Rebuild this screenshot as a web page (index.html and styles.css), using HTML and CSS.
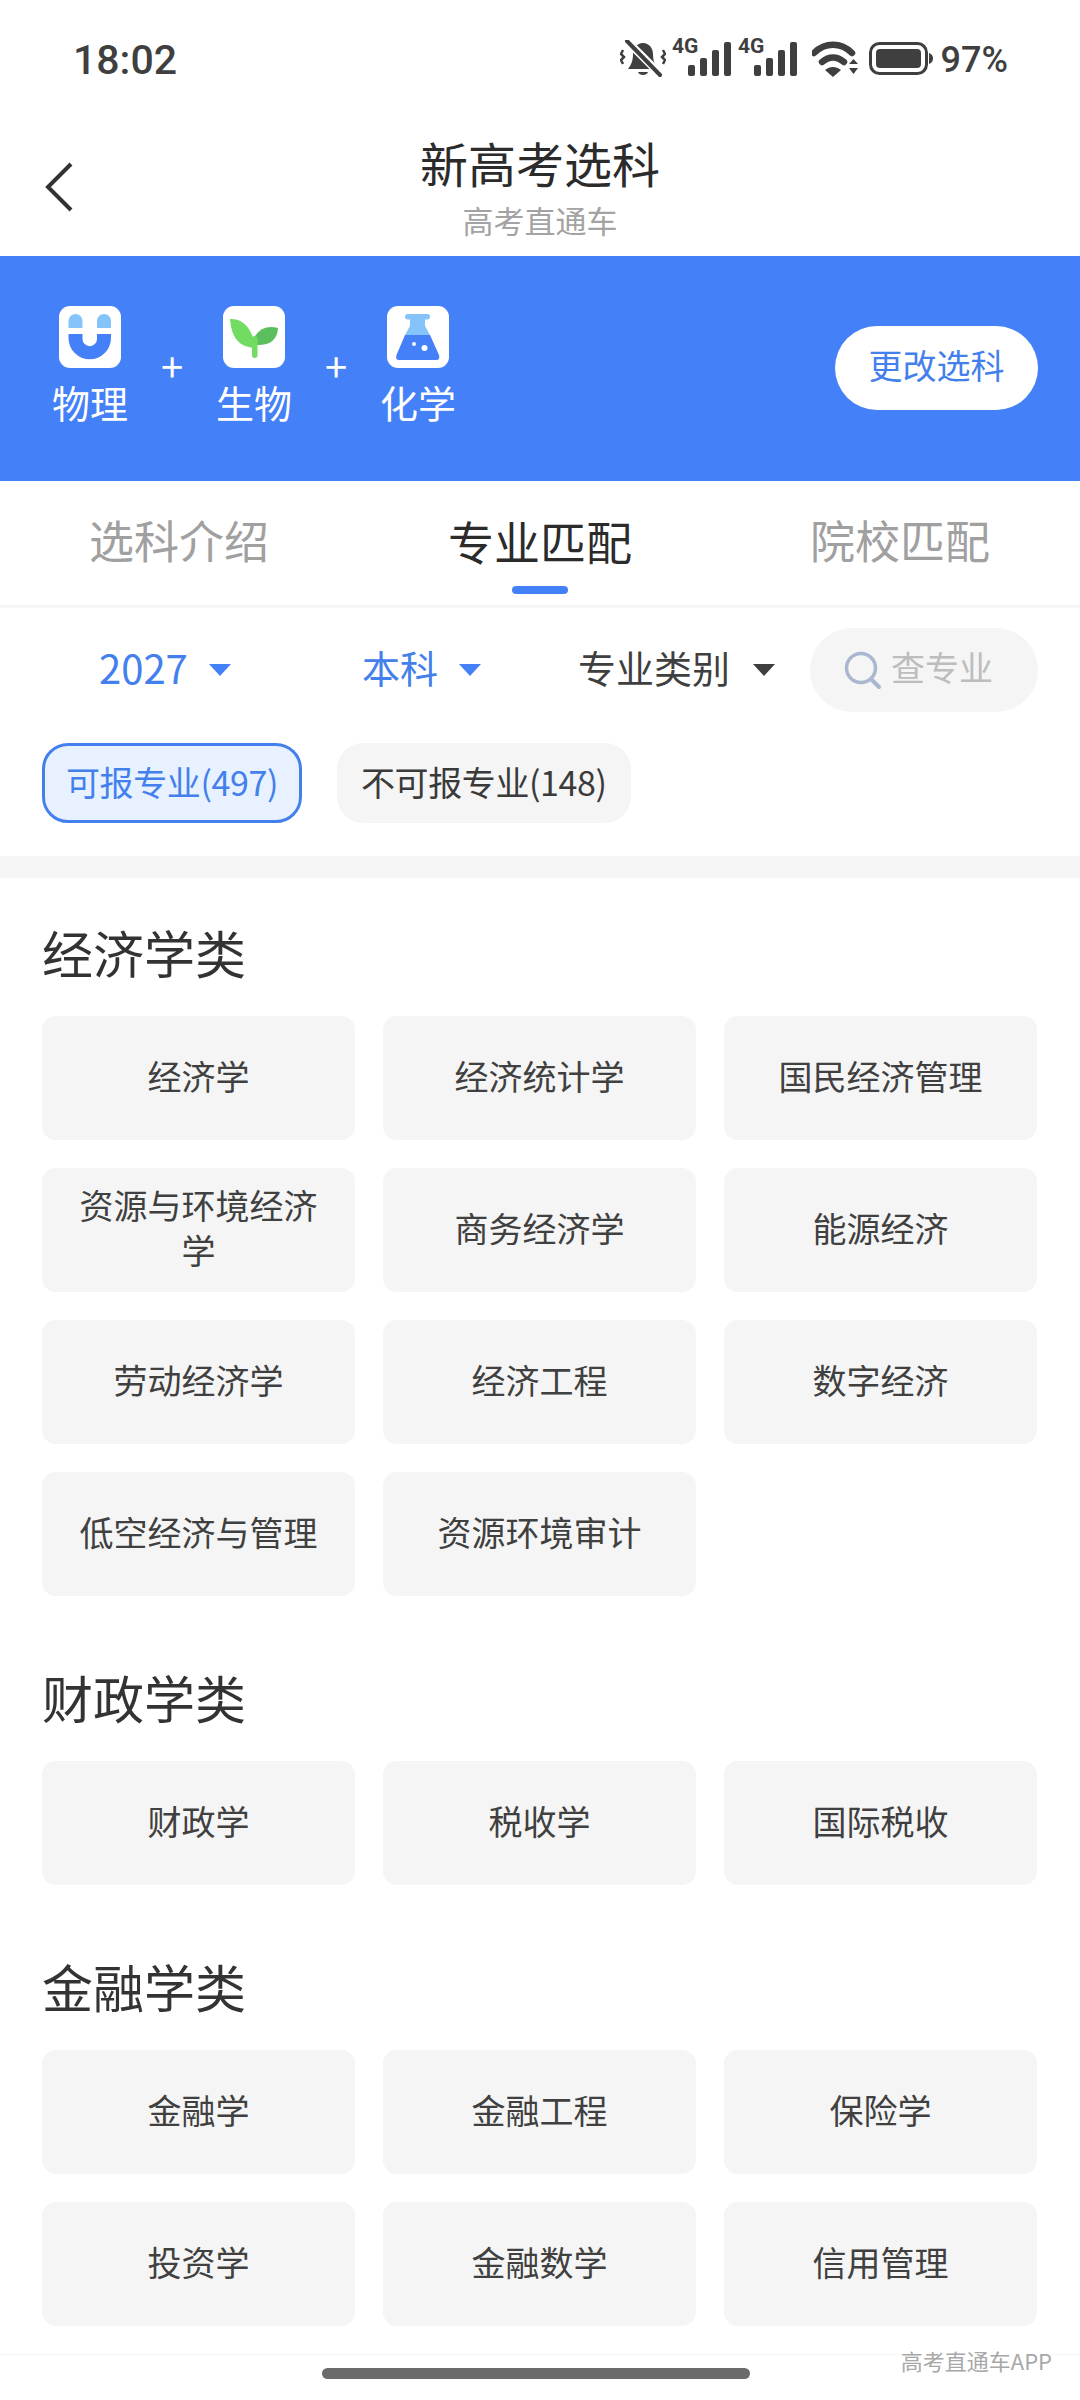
FILE: index.html
```html
<!DOCTYPE html>
<html lang="zh-CN">
<head>
  <meta charset="UTF-8" />
  <meta name="viewport" content="width=device-width, initial-scale=1.0" />
  <title>新高考选科</title>
  <link rel="stylesheet" href="styles.css">
</head>
<body>
  <div class="page">
    <div class="status-bar">
      <span class="time">18:02</span>
      <div class="status-icons">
        <svg class="icon-bell" width="46" height="40" viewBox="0 0 46 40">
          <path d="M23 3c6 0 10 5 10 11 0 7 2 11 5 15H8c3-4 5-8 5-15 0-6 4-11 10-11z" fill="#3f3f3f"/>
          <path d="M18 32h10c-1 4-9 4-10 0z" fill="#3f3f3f"/>
          <path d="M6 0L41 35" stroke="#fff" stroke-width="8"/>
          <path d="M7 1L40 35" stroke="#3f3f3f" stroke-width="4" stroke-linecap="round"/>
          <path d="M3 10l-2 4 3 3-3 3 2 4M43 10l2 4-3 3 3 3-2 4" fill="none" stroke="#3f3f3f" stroke-width="2.5"/>
        </svg>
        <svg class="icon-signal" width="60" height="48" viewBox="0 -8 60 48">
          <text x="0" y="13" class="sig-text">4G</text>
          <rect x="16" y="25" width="7" height="11" rx="2" fill="#3f3f3f"/>
          <rect x="28" y="18" width="7" height="18" rx="2" fill="#3f3f3f"/>
          <rect x="40" y="10" width="7" height="26" rx="2" fill="#3f3f3f"/>
          <rect x="52" y="2" width="7" height="34" rx="2" fill="#3f3f3f"/>
        </svg>
        <svg class="icon-signal" width="60" height="48" viewBox="0 -8 60 48">
          <text x="0" y="13" class="sig-text">4G</text>
          <rect x="16" y="25" width="7" height="11" rx="2" fill="#3f3f3f"/>
          <rect x="28" y="18" width="7" height="18" rx="2" fill="#3f3f3f"/>
          <rect x="40" y="10" width="7" height="26" rx="2" fill="#3f3f3f"/>
          <rect x="52" y="2" width="7" height="34" rx="2" fill="#3f3f3f"/>
        </svg>
        <svg class="icon-wifi" width="46" height="40" viewBox="0 0 46 40">
          <path d="M2 13C13 2 29 2 40 13" fill="none" stroke="#3f3f3f" stroke-width="6.5" stroke-linecap="round"/>
          <path d="M10 22c7-6 15-6 22 0" fill="none" stroke="#3f3f3f" stroke-width="6.5" stroke-linecap="round"/>
          <path d="M13 30c5-4 11-4 16 0l-8 7z" fill="#3f3f3f"/>
          <path d="M37 24l4.500-5 4.500 5zM37 28l4.500 6 4.500-6z" fill="#3f3f3f"/>
        </svg>
        <svg class="icon-battery" width="64" height="40" viewBox="0 0 64 40">
          <rect x="1.500" y="3.500" width="56" height="30" rx="9" fill="none" stroke="#3f3f3f" stroke-width="3"/>
          <rect x="7" y="9" width="45" height="19" rx="4" fill="#3f3f3f"/>
          <path d="M60 13c3 1 4 3 4 5.500s-1 4.500-4 5.500z" fill="#3f3f3f"/>
        </svg>
        <span class="battery-text">97%</span>
      </div>
    </div>

    <header class="app-header">
      <svg class="back" width="30" height="52" viewBox="0 0 30 52">
        <path d="M27 3L4 26l23 23" fill="none" stroke="#333" stroke-width="4"/>
      </svg>
      <h1 class="title">新高考选科</h1>
      <div class="subtitle">高考直通车</div>
    </header>

    <section class="banner">
      <div class="subjects">
        <div class="subject">
          <svg width="62" height="62" viewBox="0 0 62 62">
            <rect width="62" height="62" rx="11" fill="#fff"/>
            <path d="M9.500 22v-7a7 7 0 0 1 14 0v7zM38 22v-7a7 7 0 0 1 14 0v7z" fill="#85c4fb"/>
            <path d="M9.500 28h14v5a7.200 7.200 0 0 0 14.500 0v-5h14v4a21 21 0 0 1-42.500 0z" fill="#4480f7"/>
          </svg>
          <span>物理</span>
        </div>
        <span class="plus">+</span>
        <div class="subject">
          <svg width="62" height="62" viewBox="0 0 62 62">
            <rect width="62" height="62" rx="11" fill="#fff"/>
            <path d="M32 30Q40 18 55 22 54 40 33 39z" fill="#5cbf5e"/>
            <path d="M7 13Q27 12 33 42 9 42 7 13z" fill="#72db62"/>
            <rect x="29" y="30" width="5.500" height="22" rx="2.700" fill="#72db62"/>
          </svg>
          <span>生物</span>
        </div>
        <span class="plus">+</span>
        <div class="subject">
          <svg width="62" height="62" viewBox="0 0 62 62">
            <rect width="62" height="62" rx="11" fill="#fff"/>
            <rect x="18" y="8" width="25" height="5.500" rx="2.700" fill="#85c4fb"/>
            <path d="M23 13h15v7l5 9H18l5-9z" fill="#85c4fb"/>
            <path d="M18 29h25l9 20q1.500 5-3 5H12q-4 0-2.500-5z" fill="#4480f7"/>
            <circle cx="27" cy="38" r="2" fill="#fff"/>
            <circle cx="37.500" cy="42" r="3" fill="#fff"/>
          </svg>
          <span>化学</span>
        </div>
      </div>
      <div class="change-btn">更改选科</div>
    </section>

    <nav class="tabs">
      <div class="tab">选科介绍</div>
      <div class="tab active">专业匹配</div>
      <div class="tab">院校匹配</div>
    </nav>

    <div class="filters">
      <div class="filter filter-year"><span>2027</span><i class="caret"></i></div>
      <div class="filter filter-level"><span>本科</span><i class="caret"></i></div>
      <div class="filter filter-type"><span>专业类别</span><i class="caret"></i></div>
      <div class="search">
        <svg width="40" height="40" viewBox="0 0 40 40">
          <circle cx="18" cy="18" r="14.500" fill="none" stroke="#a9b8d0" stroke-width="3.500"/>
          <path d="M28 29l8 8" stroke="#a9b8d0" stroke-width="4" stroke-linecap="round"/>
        </svg>
        <span>查专业</span>
      </div>
    </div>

    <div class="chips">
      <div class="chip selected">可报专业(497)</div>
      <div class="chip">不可报专业(148)</div>
    </div>

    <div class="band"></div>

    <section class="group">
      <h2>经济学类</h2>
      <div class="majors">
        <div class="major">经济学</div>
        <div class="major">经济统计学</div>
        <div class="major">国民经济管理</div>
        <div class="major">资源与环境经济学</div>
        <div class="major">商务经济学</div>
        <div class="major">能源经济</div>
        <div class="major">劳动经济学</div>
        <div class="major">经济工程</div>
        <div class="major">数字经济</div>
        <div class="major">低空经济与管理</div>
        <div class="major">资源环境审计</div>
      </div>
    </section>

    <section class="group">
      <h2>财政学类</h2>
      <div class="majors">
        <div class="major">财政学</div>
        <div class="major">税收学</div>
        <div class="major">国际税收</div>
      </div>
    </section>

    <section class="group">
      <h2>金融学类</h2>
      <div class="majors">
        <div class="major">金融学</div>
        <div class="major">金融工程</div>
        <div class="major">保险学</div>
        <div class="major">投资学</div>
        <div class="major">金融数学</div>
        <div class="major">信用管理</div>
      </div>
    </section>

    <div class="bottom-line"></div>
    <div class="watermark">高考直通车APP</div>
    <div class="home-bar"></div>
  </div>
</body>
</html>
```

FILE: styles.css
```css
* {
  box-sizing: border-box;
}

html,
body {
  margin: 0;
  padding: 0;
  background: #fff;
}

body {
  font-family: "Noto Sans CJK SC", "Noto Sans", sans-serif;
  color: #333;
}

.page {
  position: relative;
  width: 1080px;
  height: 2400px;
  overflow: hidden;
  background: #fff;
}

/* status bar */
.status-bar {
  height: 100px;
  padding: 40px 72px 0 73px;
  display: flex;
  justify-content: space-between;
  align-items: flex-start;
  color: #3f3f3f;
}

.time {
  font-family: Roboto, sans-serif;
  font-size: 41px;
  font-weight: 500;
  line-height: 40px;
}

.status-icons {
  display: flex;
  align-items: flex-start;
}

.icon-signal {
  margin: -8px 0 0 6px;
}

.icon-wifi {
  margin-left: 14px;
}

.icon-battery {
  margin-left: 11px;
}

.sig-text {
  font-family: Roboto, sans-serif;
  font-size: 21px;
  font-weight: 700;
  fill: #3f3f3f;
}

.battery-text {
  font-family: Roboto, sans-serif;
  font-size: 36px;
  font-weight: 500;
  line-height: 40px;
  margin-left: 8px;
}

/* header */
.app-header {
  position: relative;
  height: 156px;
  text-align: center;
}

.back {
  position: absolute;
  left: 44px;
  top: 61px;
}

.title {
  margin: 0;
  padding-top: 27px;
  font-size: 48px;
  font-weight: 400;
  line-height: 70px;
  color: #2b2b2b;
}

.subtitle {
  font-size: 31px;
  line-height: 46px;
  color: #a3a3a3;
}

/* blue banner */
.banner {
  height: 225px;
  background: #4480f7;
  padding: 0 42px 0 40px;
  display: flex;
  justify-content: space-between;
  align-items: center;
}

.subjects {
  display: flex;
  align-items: center;
}

.subject {
  width: 100px;
  display: flex;
  flex-direction: column;
  align-items: center;
  color: #fff;
  font-size: 38px;
  line-height: 54px;
}

.subject svg {
  display: block;
  margin-bottom: 10px;
}

.subject span {
  margin: -3px 0 3px;
}

.plus {
  width: 64px;
  text-align: center;
  color: #fff;
  font-size: 40px;
  line-height: 40px;
  margin-top: -8px;
}

.change-btn {
  width: 203px;
  height: 84px;
  margin-bottom: 1px;
  padding-bottom: 8px;
  border-radius: 42px;
  background: #fff;
  color: #4480ec;
  font-size: 34px;
  display: flex;
  align-items: center;
  justify-content: center;
}

/* tabs */
.tabs {
  height: 127px;
  border-bottom: 3px solid #f5f5f5;
  display: grid;
  grid-template-columns: repeat(3, 360px);
}

.tab {
  position: relative;
  text-align: center;
  font-size: 45px;
  line-height: 118px;
  color: #a0a0a0;
}

.tab:first-child {
  padding-right: 2px;
}

.tab.active {
  color: #2b2b2b;
  font-size: 46px;
}

.tab.active::after {
  content: "";
  position: absolute;
  left: 152px;
  bottom: 11px;
  width: 56px;
  height: 8px;
  border-radius: 4px;
  background: #4480f7;
}

/* filters */
.filters {
  height: 135px;
  padding: 0 0 12px 99px;
  display: flex;
  align-items: center;
}

.filter {
  display: flex;
  align-items: center;
  font-size: 38px;
  color: #3f3f3f;
}

.filter span,
.search span {
  margin-top: -6px;
}

.filter-year {
  width: 263px;
  color: #4480ec;
  font-size: 40px;
}

.filter-level {
  width: 216px;
  color: #4480ec;
}

.filter-type {
  width: 232px;
}

.caret {
  width: 0;
  height: 0;
  margin-left: 21px;
  border-left: 11px solid transparent;
  border-right: 11px solid transparent;
  border-top: 12px solid currentColor;
}

.filter-year .caret,
.filter-level .caret {
  border-top-color: #4480f7;
}

.filter-type .caret {
  margin-left: 23px;
}

.search {
  width: 228px;
  height: 84px;
  border-radius: 42px;
  background: #f5f5f5;
  padding-left: 33px;
  display: flex;
  align-items: center;
  gap: 8px;
  font-size: 34px;
  color: #bdbdbd;
}

/* chips */
.chips {
  padding-left: 42px;
  display: flex;
  gap: 35px;
}

.chip {
  height: 80px;
  padding: 0 24px;
  border-radius: 26px;
  background: #f5f5f5;
  font-size: 34px;
  letter-spacing: -0.4px;
  line-height: 78px;
  color: #3a3a3a;
}

.chip.selected {
  border: 3px solid #4480ec;
  background: #e8f1ff;
  color: #4480ec;
  line-height: 72px;
  padding: 0 21px;
}

.band {
  height: 22px;
  margin-top: 33px;
  background: #f5f5f5;
}

/* major groups */
.group {
  padding: 0 43px 0 42px;
  margin-top: 67px;
}

.band + .group {
  margin-top: 40px;
}

.group h2 {
  margin: 0 0 30px;
  font-size: 51px;
  font-weight: 400;
  line-height: 68px;
  color: #333;
}

.majors {
  display: grid;
  grid-template-columns: repeat(3, 1fr);
  gap: 28px;
}

.major {
  height: 124px;
  padding: 0 36px 6px;
  border-radius: 14px;
  background: #f5f5f5;
  font-size: 34px;
  line-height: 45px;
  color: #404040;
  text-align: center;
  display: flex;
  align-items: center;
  justify-content: center;
}

/* overlays at the bottom */
.bottom-line {
  position: absolute;
  left: 0;
  right: 0;
  top: 2354px;
  height: 1px;
  background: #f4f4f4;
}

.watermark {
  position: absolute;
  right: 28px;
  top: 2344px;
  font-size: 22px;
  line-height: 32px;
  color: #a8a8a8;
  background: #fff;
}

.home-bar {
  position: absolute;
  left: 322px;
  top: 2368px;
  width: 428px;
  height: 11px;
  border-radius: 6px;
  background: #6b6b6b;
}
```
